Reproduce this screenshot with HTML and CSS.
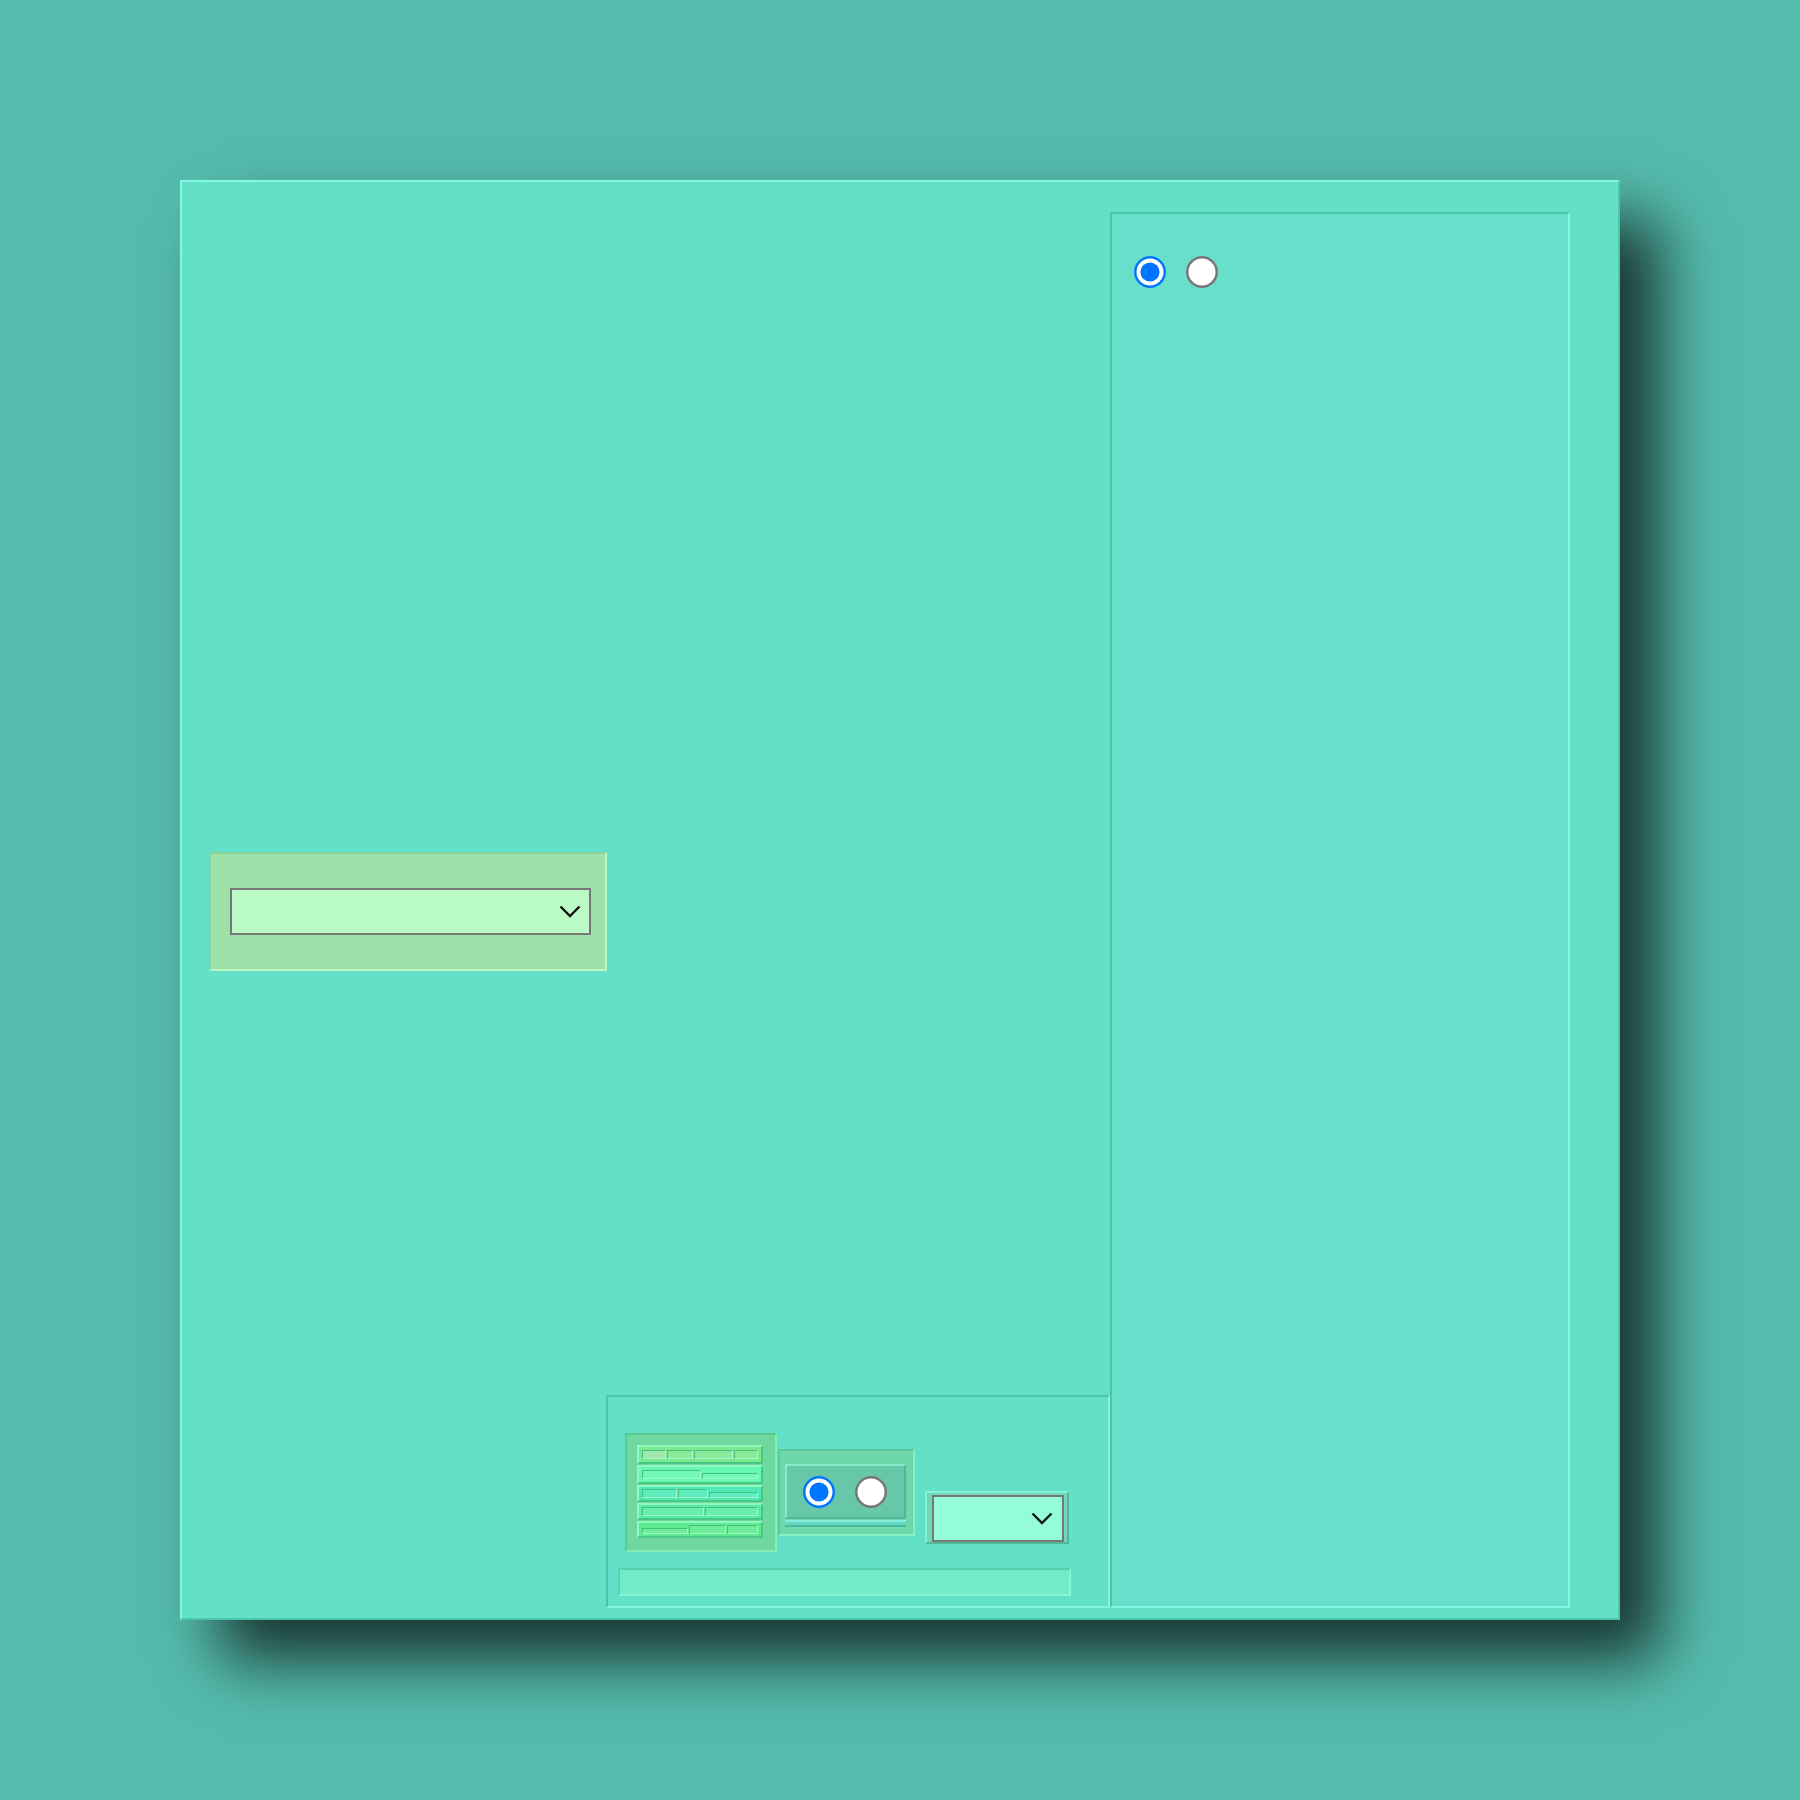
FILE: index.html
```html
<!DOCTYPE html>
<html lang="en">
<head>
<meta charset="utf-8">
<title>Panel</title>
<link rel="stylesheet" href="styles.css">
</head>
<body>
<div class="stage">
  <div class="window">
    <div class="left-col">
      <div class="select-box">
        <div class="select select-wide">
          <svg class="chev" width="22" height="13" viewBox="0 0 22 13"><path d="M1.5 1.5 L11 11 L20.5 1.5" fill="none" stroke="#111" stroke-width="2.4"/></svg>
        </div>
      </div>
      <div class="dock">
        <div class="dock-row">
          <div class="grid-box">
            <div class="grid">
              <div class="grow r1">
                <span class="cell first" style="flex:23"></span>
                <span class="cell" style="flex:26"></span>
                <span class="cell" style="flex:40"></span>
                <span class="cell" style="flex:23"></span>
              </div>
              <div class="grow r2">
                <span class="cell" style="flex:60"></span>
                <span class="cell short" style="flex:56"></span>
              </div>
              <div class="grow r3">
                <span class="cell" style="flex:35"></span>
                <span class="cell" style="flex:30"></span>
                <span class="cell short" style="flex:50"></span>
              </div>
              <div class="grow r4">
                <span class="cell" style="flex:63"></span>
                <span class="cell" style="flex:53"></span>
              </div>
              <div class="grow r5">
                <span class="cell short" style="flex:46"></span>
                <span class="cell" style="flex:36"></span>
                <span class="cell" style="flex:30"></span>
              </div>
            </div>
          </div>
          <div class="radio-box">
            <div class="radio-inner">
              <input type="radio" name="b" checked>
              <input type="radio" name="b">
            </div>
            <div class="radio-meter"></div>
          </div>
          <div class="drop-box">
            <div class="select select-small">
              <svg class="chev" width="22" height="13" viewBox="0 0 22 13"><path d="M1.5 1.5 L11 11 L20.5 1.5" fill="none" stroke="#111" stroke-width="2.4"/></svg>
            </div>
          </div>
        </div>
        <div class="dock-bar"></div>
      </div>
    </div>
    <aside class="side">
      <div class="radios">
        <input type="radio" name="a" checked>
        <input type="radio" name="a">
      </div>
    </aside>
  </div>
</div>
</body>
</html>
```
FILE: styles.css
```css
html, body {
  margin: 0;
  padding: 0;
}
body {
  background: #55bcad;
  font-family: "Liberation Sans", Arial, sans-serif;
}
.stage {
  width: 1800px;
  height: 1800px;
  padding: 180px 0 0 180px;
  box-sizing: border-box;
}
.window {
  width: 1440px;
  height: 1440px;
  box-sizing: border-box;
  background: #63e0c8;
  border: 2px solid;
  border-color: #84f8de #4cc6a9 #4cc6a9 #84f8de;
  box-shadow: 40px 40px 60px rgba(0, 0, 0, 0.72);
  padding: 30px 48px 10px 0;
  display: flex;
}
.left-col {
  flex: 1;
  display: flex;
  flex-direction: column;
}
.select-box {
  width: 398px;
  height: 119px;
  box-sizing: border-box;
  margin: 640px 0 0 27px;
  background: #9ee2a9;
  border: 2px solid;
  border-color: #88d49a #b9f6c6 #b9f6c6 #88d49a;
  padding-left: 19px;
  display: flex;
  align-items: center;
}
.select {
  box-sizing: border-box;
  height: 47px;
  border: 2px solid #777;
  display: flex;
  align-items: center;
  justify-content: flex-end;
}
.select-wide {
  width: 361px;
  background: #bbfcc6;
  padding-right: 8px;
}
.select-small {
  width: 132px;
  background: #94fcd8;
  padding-right: 9px;
}
.chev {
  display: block;
}
.dock {
  margin-top: auto;
  align-self: flex-end;
  width: 504px;
  height: 213px;
  box-sizing: border-box;
  border: 2px solid;
  border-color: #4cc6a9 #84f8de #84f8de #4cc6a9;
  padding: 36px 0 0 17px;
  display: flex;
  flex-direction: column;
}
.dock-row {
  display: flex;
  align-items: flex-start;
}
.grid-box {
  width: 152px;
  height: 119px;
  box-sizing: border-box;
  background: #6fd89e;
  border: 2px solid;
  border-color: #5cc88f #82f0b2 #82f0b2 #5cc88f;
  padding: 10px;
}
.grid {
  width: 126px;
  height: 93px;
  display: flex;
  flex-direction: column;
  gap: 1px;
}
.grow {
  box-sizing: border-box;
  height: 17px;
  border: 2px solid;
  border-color: #92f8bc #48c884 #48c884 #92f8bc;
  padding: 2px 3px 2px 3px;
  display: flex;
  gap: 1px;
}
.grow.r1, .grow.r2 {
  height: 19px;
  padding-top: 3px;
  padding-bottom: 3px;
}
.r1 { background: #7ce890; }
.r2 { background: #64f8b0; }
.r3 { background: #50eab8; }
.r4 { background: #58eca6; }
.r5 { background: #5eea8e; }
.cell {
  box-sizing: border-box;
  border: 1.5px solid;
  border-color: #46c07e #a2fcc8 #a2fcc8 #46c07e;
  background: rgba(255, 255, 255, 0.1);
  min-width: 0;
}
.cell.first {
  background: #a2e8ac;
}
.cell.short {
  margin-top: 3px;
}
.radio-box {
  width: 137px;
  height: 87px;
  box-sizing: border-box;
  margin: 16px 0 0 1px;
  background: #6ed8ac;
  border: 2px solid;
  border-color: #5cc8a0 #84f2c4 #84f2c4 #5cc8a0;
  padding: 13px 0 0 5px;
}
.radio-inner {
  width: 121px;
  height: 55px;
  box-sizing: border-box;
  background: #66c8a8;
  border: 2px solid;
  border-color: #84eac8 #50b898 #50b898 #84eac8;
  padding: 10px 0 0 16px;
  display: flex;
  gap: 20px;
}
.radio-meter {
  width: 121px;
  height: 7px;
  box-sizing: border-box;
  margin-top: 1px;
  background: #64d8c2;
  border-top: 2px solid #84eedc;
  border-bottom: 2px solid #4cb89e;
}
input[type="radio"] {
  width: 13px;
  height: 13px;
  margin: 0;
  flex: none;
  zoom: 2.4615;
}
.drop-box {
  width: 144px;
  height: 53px;
  box-sizing: border-box;
  margin: 58px 0 0 10px;
  background: #70d8b8;
  border: 2px solid;
  border-color: #86f2d0 #52b898 #52b898 #86f2d0;
  padding: 2px 3px 0 5px;
}
.dock-bar {
  width: 453px;
  height: 28px;
  box-sizing: border-box;
  margin: 16px 0 0 -7px;
  background: #72ecc6;
  border: 2px solid;
  border-color: #58d0b0 #84f8d6 #84f8d6 #58d0b0;
}
.side {
  width: 460px;
  box-sizing: border-box;
  background: #68dfca;
  border: 2px solid;
  border-color: #4cc6a9 #84f8e0 #84f8e0 #4cc6a9;
  padding: 42px 0 0 22px;
}
.radios {
  display: flex;
  gap: 20px;
}
```
